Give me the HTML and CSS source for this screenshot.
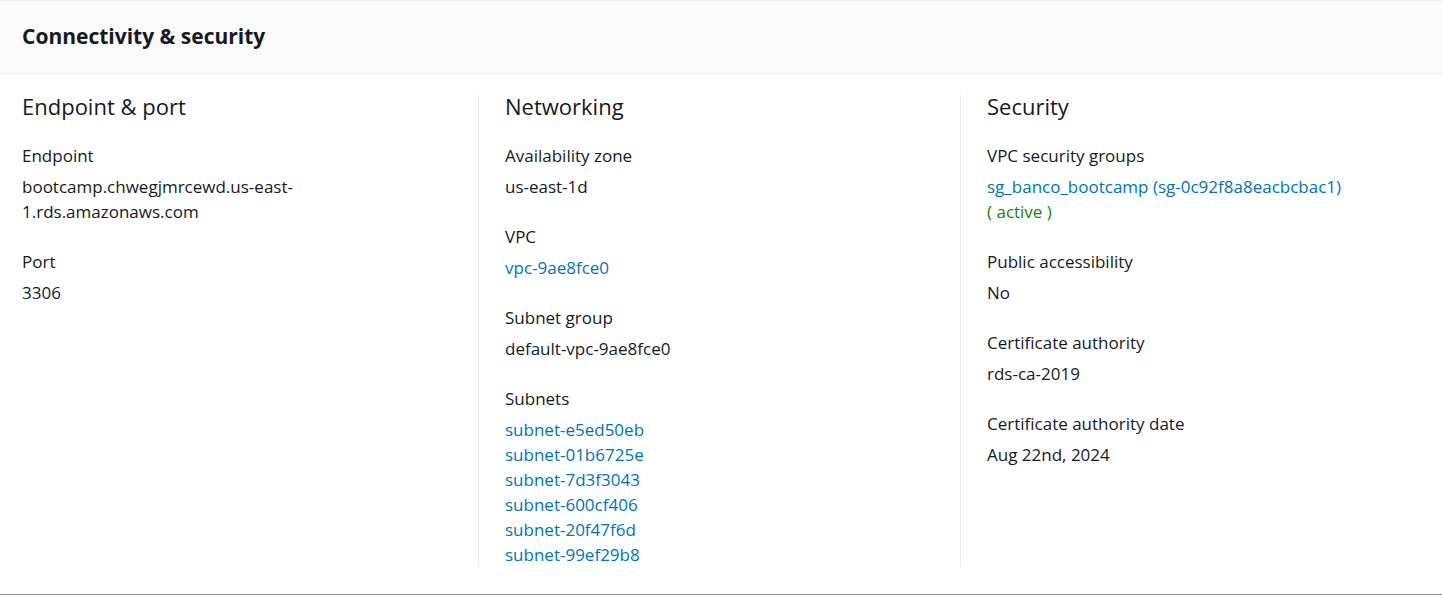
FILE: index.html
```html
<!DOCTYPE html>
<html>
<head>
<meta charset="utf-8">
<link rel="stylesheet" href="styles.css">
</head>
<body>
<div class="panel">
  <div class="panel-header"><h2>Connectivity &amp; security</h2></div>
  <div class="cols">
    <div class="col">
      <h3>Endpoint &amp; port</h3>
      <div class="item">
        <div class="label">Endpoint</div>
        <div class="value endpoint">bootcamp.chwegjmrcewd.us-east-<br>1.rds.amazonaws.com</div>
      </div>
      <div class="item">
        <div class="label">Port</div>
        <div class="value">3306</div>
      </div>
    </div>
    <div class="col divided">
      <h3>Networking</h3>
      <div class="item">
        <div class="label">Availability zone</div>
        <div class="value">us-east-1d</div>
      </div>
      <div class="item">
        <div class="label">VPC</div>
        <div class="value"><a href="#">vpc-9ae8fce0</a></div>
      </div>
      <div class="item">
        <div class="label">Subnet group</div>
        <div class="value">default-vpc-9ae8fce0</div>
      </div>
      <div class="item">
        <div class="label">Subnets</div>
        <div class="value list">
          <a href="#">subnet-e5ed50eb</a>
          <a href="#">subnet-01b6725e</a>
          <a href="#">subnet-7d3f3043</a>
          <a href="#">subnet-600cf406</a>
          <a href="#">subnet-20f47f6d</a>
          <a href="#">subnet-99ef29b8</a>
        </div>
      </div>
    </div>
    <div class="col divided">
      <h3>Security</h3>
      <div class="item">
        <div class="label">VPC security groups</div>
        <div class="value"><a href="#">sg_banco_bootcamp (sg-0c92f8a8eacbcbac1)</a><br><span class="ok">( active )</span></div>
      </div>
      <div class="item">
        <div class="label">Public accessibility</div>
        <div class="value">No</div>
      </div>
      <div class="item">
        <div class="label">Certificate authority</div>
        <div class="value">rds-ca-2019</div>
      </div>
      <div class="item">
        <div class="label">Certificate authority date</div>
        <div class="value">Aug 22nd, 2024</div>
      </div>
    </div>
  </div>
</div>
</body>
</html>
```
FILE: styles.css
```css
html, body {
  margin: 0;
  padding: 0;
  background: #ffffff;
}
body {
  font-family: "Open Sans", "Noto Sans", sans-serif;
  color: #16191f;
  font-size: 17px;
  line-height: 25px;
}
.panel {
  border-top: 1px solid #eaeded;
  border-bottom: 1px solid #879596;
  box-shadow: 0 1px 1px 0 rgba(0, 28, 36, 0.2);
}
.panel-header {
  background: #fafafa;
  border-bottom: 1px solid #eaeded;
  height: 73px;
  box-sizing: border-box;
  padding: 0 22px 2px;
  display: flex;
  align-items: center;
}
.panel-header h2 {
  margin: 0;
  font-size: 21px;
  font-weight: 700;
  line-height: 28px;
}
.cols {
  display: grid;
  grid-template-columns: 456px 482px 1fr;
  padding: 21px 0 27px 22px;
}
.col.divided {
  border-left: 1px solid #eaeded;
  padding-left: 26px;
}
.col h3 {
  margin: 0;
  padding-bottom: 1px;
  font-size: 22px;
  font-weight: 400;
  line-height: 22px;
}
.item {
  margin-top: 25px;
}
.label {
  margin-bottom: 6px;
}
.value a {
  color: #0073bb;
  text-decoration: none;
}
.list a {
  display: block;
}
.ok {
  color: #1d8102;
}
```
